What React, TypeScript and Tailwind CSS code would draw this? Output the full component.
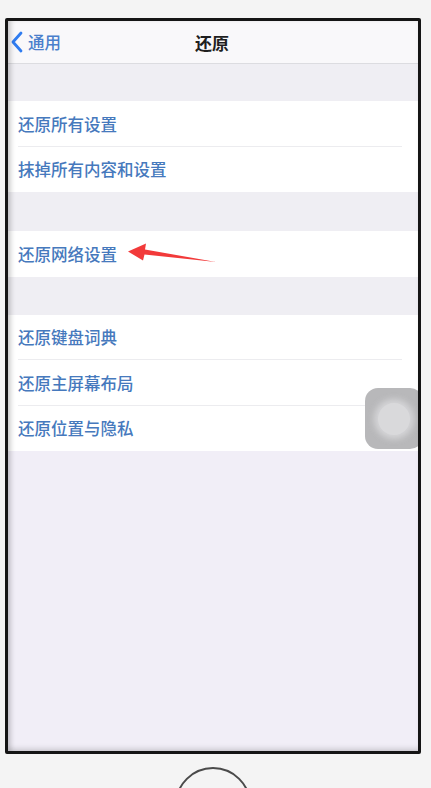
import React from "react";

const font = { fontFamily: '"Noto Sans CJK SC", "Noto Sans", sans-serif' };

function Row({ text, last }: { text: string; last?: boolean }) {
  return (
    <div className="relative flex h-[45.5px] items-center bg-white pl-[10px]">
      <span className="text-[16.5px] font-medium leading-none text-[#4679bd]">{text}</span>
      {!last && <div className="absolute bottom-0 left-[10px] right-[16px] h-px bg-[#ececef]" />}
    </div>
  );
}

export default function App() {
  return (
    <div className="relative h-[788px] w-[431px] overflow-hidden bg-[#f4f4f4]" style={font}>
      <div className="relative ml-[5px] mt-[18px] flex h-[736px] w-[416px] flex-col overflow-hidden rounded-[2px] border-[3px] border-[#151515] bg-[#f1eef7]">
        {/* nav bar */}
        <div className="relative flex h-[43px] items-center border-b border-[#dcdce0] bg-[#f9f8fa]">
          <div className="flex items-center pl-[2px]">
            <svg width="14" height="22" viewBox="0 0 14 22" className="mr-[4px]">
              <path d="M11 2 L3 11 L11 20" fill="none" stroke="#2f7cf0" strokeWidth="2.8" strokeLinecap="round" strokeLinejoin="round" />
            </svg>
            <span className="text-[16.5px] font-medium leading-none text-[#4a7fcc]">通用</span>
          </div>
          <span className="absolute left-1/2 top-1/2 -translate-x-[18px] -translate-y-1/2 text-[17px] font-semibold leading-none text-[#1f1f1f]">还原</span>
        </div>
        <div className="h-[37px] bg-[#efeef3]" />
        <div>
          <Row text="还原所有设置" />
          <Row text="抹掉所有内容和设置" last />
        </div>
        <div className="h-[39px] bg-[#efeef3]" />
        <div className="relative">
          <Row text="还原网络设置" last />
          <svg width="100" height="24" viewBox="0 0 100 24" className="absolute left-[116px] top-[10px]">
            <path d="M4 10.5 L22 2.5 L21 8.5 L92 21 L20.5 13.5 L19 19.5 Z" fill="#f23a3a" />
          </svg>
        </div>
        <div className="h-[38px] bg-[#efeef3]" />
        <div>
          <Row text="还原键盘词典" />
          <Row text="还原主屏幕布局" />
          <Row text="还原位置与隐私" last />
        </div>
        <div className="flex-1 bg-[#f1eef7]" />
        {/* assistive touch */}
        <div className="absolute left-[357px] top-[367px] flex h-[61px] w-[58px] items-center justify-center rounded-[13px] bg-[#b8b8ba]">
          <div className="h-[32px] w-[32px] rounded-full bg-[#d9d9db] shadow-[0_0_6px_4px_rgba(220,220,222,0.8)]" />
        </div>
        <div className="pointer-events-none absolute inset-0 shadow-[inset_5px_0_5px_-2px_rgba(0,0,0,0.18),inset_0_-5px_5px_-2px_rgba(0,0,0,0.12)]" />
      </div>
      {/* home button */}
      <div className="absolute left-[175px] top-[767px] h-[76px] w-[76px] rounded-full border-[2.5px] border-[#4a4a4a]" />
    </div>
  );
}
